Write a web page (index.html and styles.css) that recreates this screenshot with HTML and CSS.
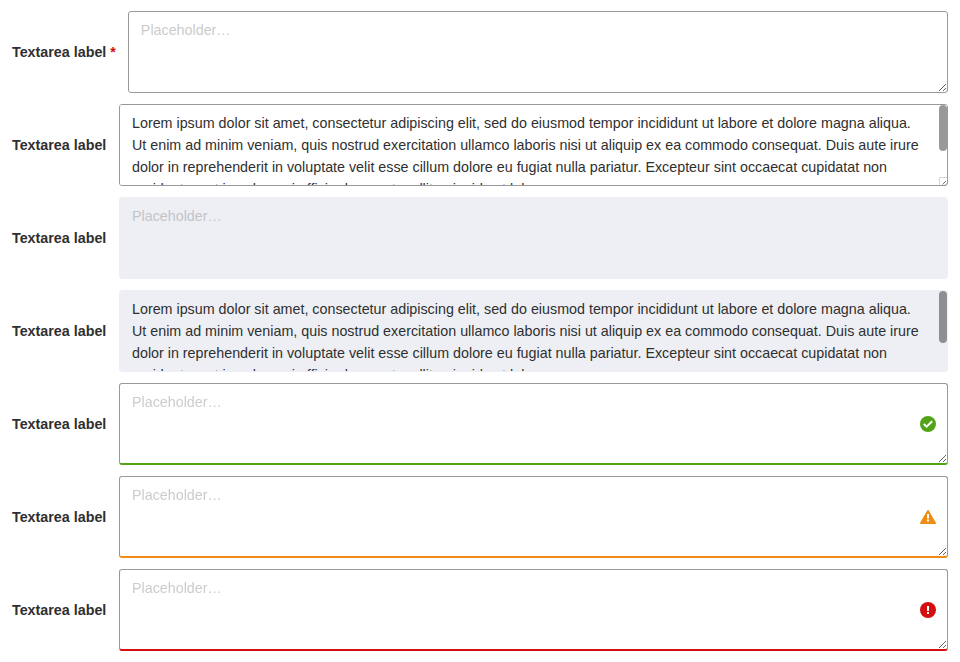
FILE: index.html
```html
<!DOCTYPE html>
<html lang="en">
<head>
<meta charset="utf-8">
<title>Textarea</title>
<link rel="stylesheet" href="styles.css">
</head>
<body>
<main class="form">
  <div class="field">
    <label class="label" for="t1">Textarea label <span class="required">*</span></label>
    <div class="control"><textarea id="t1" class="textarea" placeholder="Placeholder…" required></textarea></div>
  </div>
  <div class="field">
    <label class="label" for="t2">Textarea label</label>
    <div class="control"><textarea id="t2" class="textarea scrolling">Lorem ipsum dolor sit amet, consectetur adipiscing elit, sed do eiusmod tempor incididunt ut labore et dolore magna aliqua. Ut enim ad minim veniam, quis nostrud exercitation ullamco laboris nisi ut aliquip ex ea commodo consequat. Duis aute irure dolor in reprehenderit in voluptate velit esse cillum dolore eu fugiat nulla pariatur. Excepteur sint occaecat cupidatat non proident, sunt in culpa qui officia deserunt mollit anim id est laborum.</textarea>
      <span class="thumb"></span>
      <svg class="corner" viewBox="0 0 8 8"><path d="M.5 8V.5H8" fill="none" stroke="#d4d4d4"/><path d="M3.5 7.5 7 4M6.3 7.7 7.3 6.7" stroke="#555" stroke-width=".8"/></svg></div>
  </div>
  <div class="field">
    <label class="label" for="t3">Textarea label</label>
    <div class="control"><textarea id="t3" class="textarea" placeholder="Placeholder…" disabled></textarea></div>
  </div>
  <div class="field">
    <label class="label" for="t4">Textarea label</label>
    <div class="control"><textarea id="t4" class="textarea scrolling" disabled>Lorem ipsum dolor sit amet, consectetur adipiscing elit, sed do eiusmod tempor incididunt ut labore et dolore magna aliqua. Ut enim ad minim veniam, quis nostrud exercitation ullamco laboris nisi ut aliquip ex ea commodo consequat. Duis aute irure dolor in reprehenderit in voluptate velit esse cillum dolore eu fugiat nulla pariatur. Excepteur sint occaecat cupidatat non proident, sunt in culpa qui officia deserunt mollit anim id est laborum.</textarea>
      <span class="thumb thumb-disabled"></span></div>
  </div>
  <div class="field">
    <label class="label" for="t5">Textarea label</label>
    <div class="control"><textarea id="t5" class="textarea success" placeholder="Placeholder…"></textarea>
      <svg class="icon" viewBox="0 0 16 16"><circle cx="8" cy="8" r="8" fill="#53a318"/><path d="M3.8 8 6.6 10.7 12.2 5.3" fill="none" stroke="#fff" stroke-width="2"/></svg></div>
  </div>
  <div class="field">
    <label class="label" for="t6">Textarea label</label>
    <div class="control"><textarea id="t6" class="textarea warning" placeholder="Placeholder…"></textarea>
      <svg class="icon" viewBox="0 0 16 16"><path d="M8 1.8 15.2 14.2H.8Z" fill="#f08c13" stroke="#f08c13" stroke-width="1.6" stroke-linejoin="round"/><path d="M7 5h2v4.5H7zM7 10.5h2v2H7z" fill="#fff"/></svg></div>
  </div>
  <div class="field">
    <label class="label" for="t7">Textarea label</label>
    <div class="control"><textarea id="t7" class="textarea error" placeholder="Placeholder…"></textarea>
      <svg class="icon" viewBox="0 0 16 16"><circle cx="8" cy="8" r="8" fill="#d40f0f"/><path d="M7 4h2v5H7zM7 10h2v2H7z" fill="#fff"/></svg></div>
  </div>
</main>
</body>
</html>
```
FILE: styles.css
```css
* { box-sizing: border-box; }
body {
  margin: 0;
  background: #fff;
  color: #2f2f2f;
  font: 14.3px/22px "Liberation Sans", Arial, sans-serif;
}
.form {
  display: flex;
  flex-direction: column;
  gap: 11px;
  padding: 11px 12px 0;
}
.field {
  display: flex;
  align-items: center;
  gap: 12px;
  height: 82px;
}
.label { min-width: 95px; font-weight: 700; white-space: nowrap; }
.required { color: #d40f0f; }
.control { position: relative; flex: 1; height: 82px; }
.textarea {
  display: block;
  width: 100%;
  height: 82px;
  margin: 0;
  padding: 7px 12px;
  border: 1px solid #999;
  border-radius: 3px;
  background: #fff;
  color: #2f2f2f;
  font: inherit;
  resize: both;
  outline: 0;
}
.textarea::placeholder { color: #ccc; opacity: 1; }
.scrolling { padding-right: 20px; resize: none; scrollbar-width: none; }
.textarea:disabled { background: #eeeff4; border-color: #eeeff4; resize: none; }
.textarea:disabled::placeholder { color: #c3c4c8; }
.thumb {
  position: absolute;
  top: 1px;
  right: 1px;
  width: 8px;
  height: 46px;
  border-radius: 4px;
  background: #999;
}
.thumb-disabled { height: 52px; background: #8e8f92; }
.corner { position: absolute; right: 1px; bottom: 1px; width: 8px; height: 8px; }
.success { border-bottom: 2px solid #53a318; }
.warning { border-bottom: 2px solid #f08c13; }
.error { border-bottom: 2px solid #d40f0f; }
.icon { position: absolute; top: 33px; right: 12px; width: 16px; height: 16px; }
```
